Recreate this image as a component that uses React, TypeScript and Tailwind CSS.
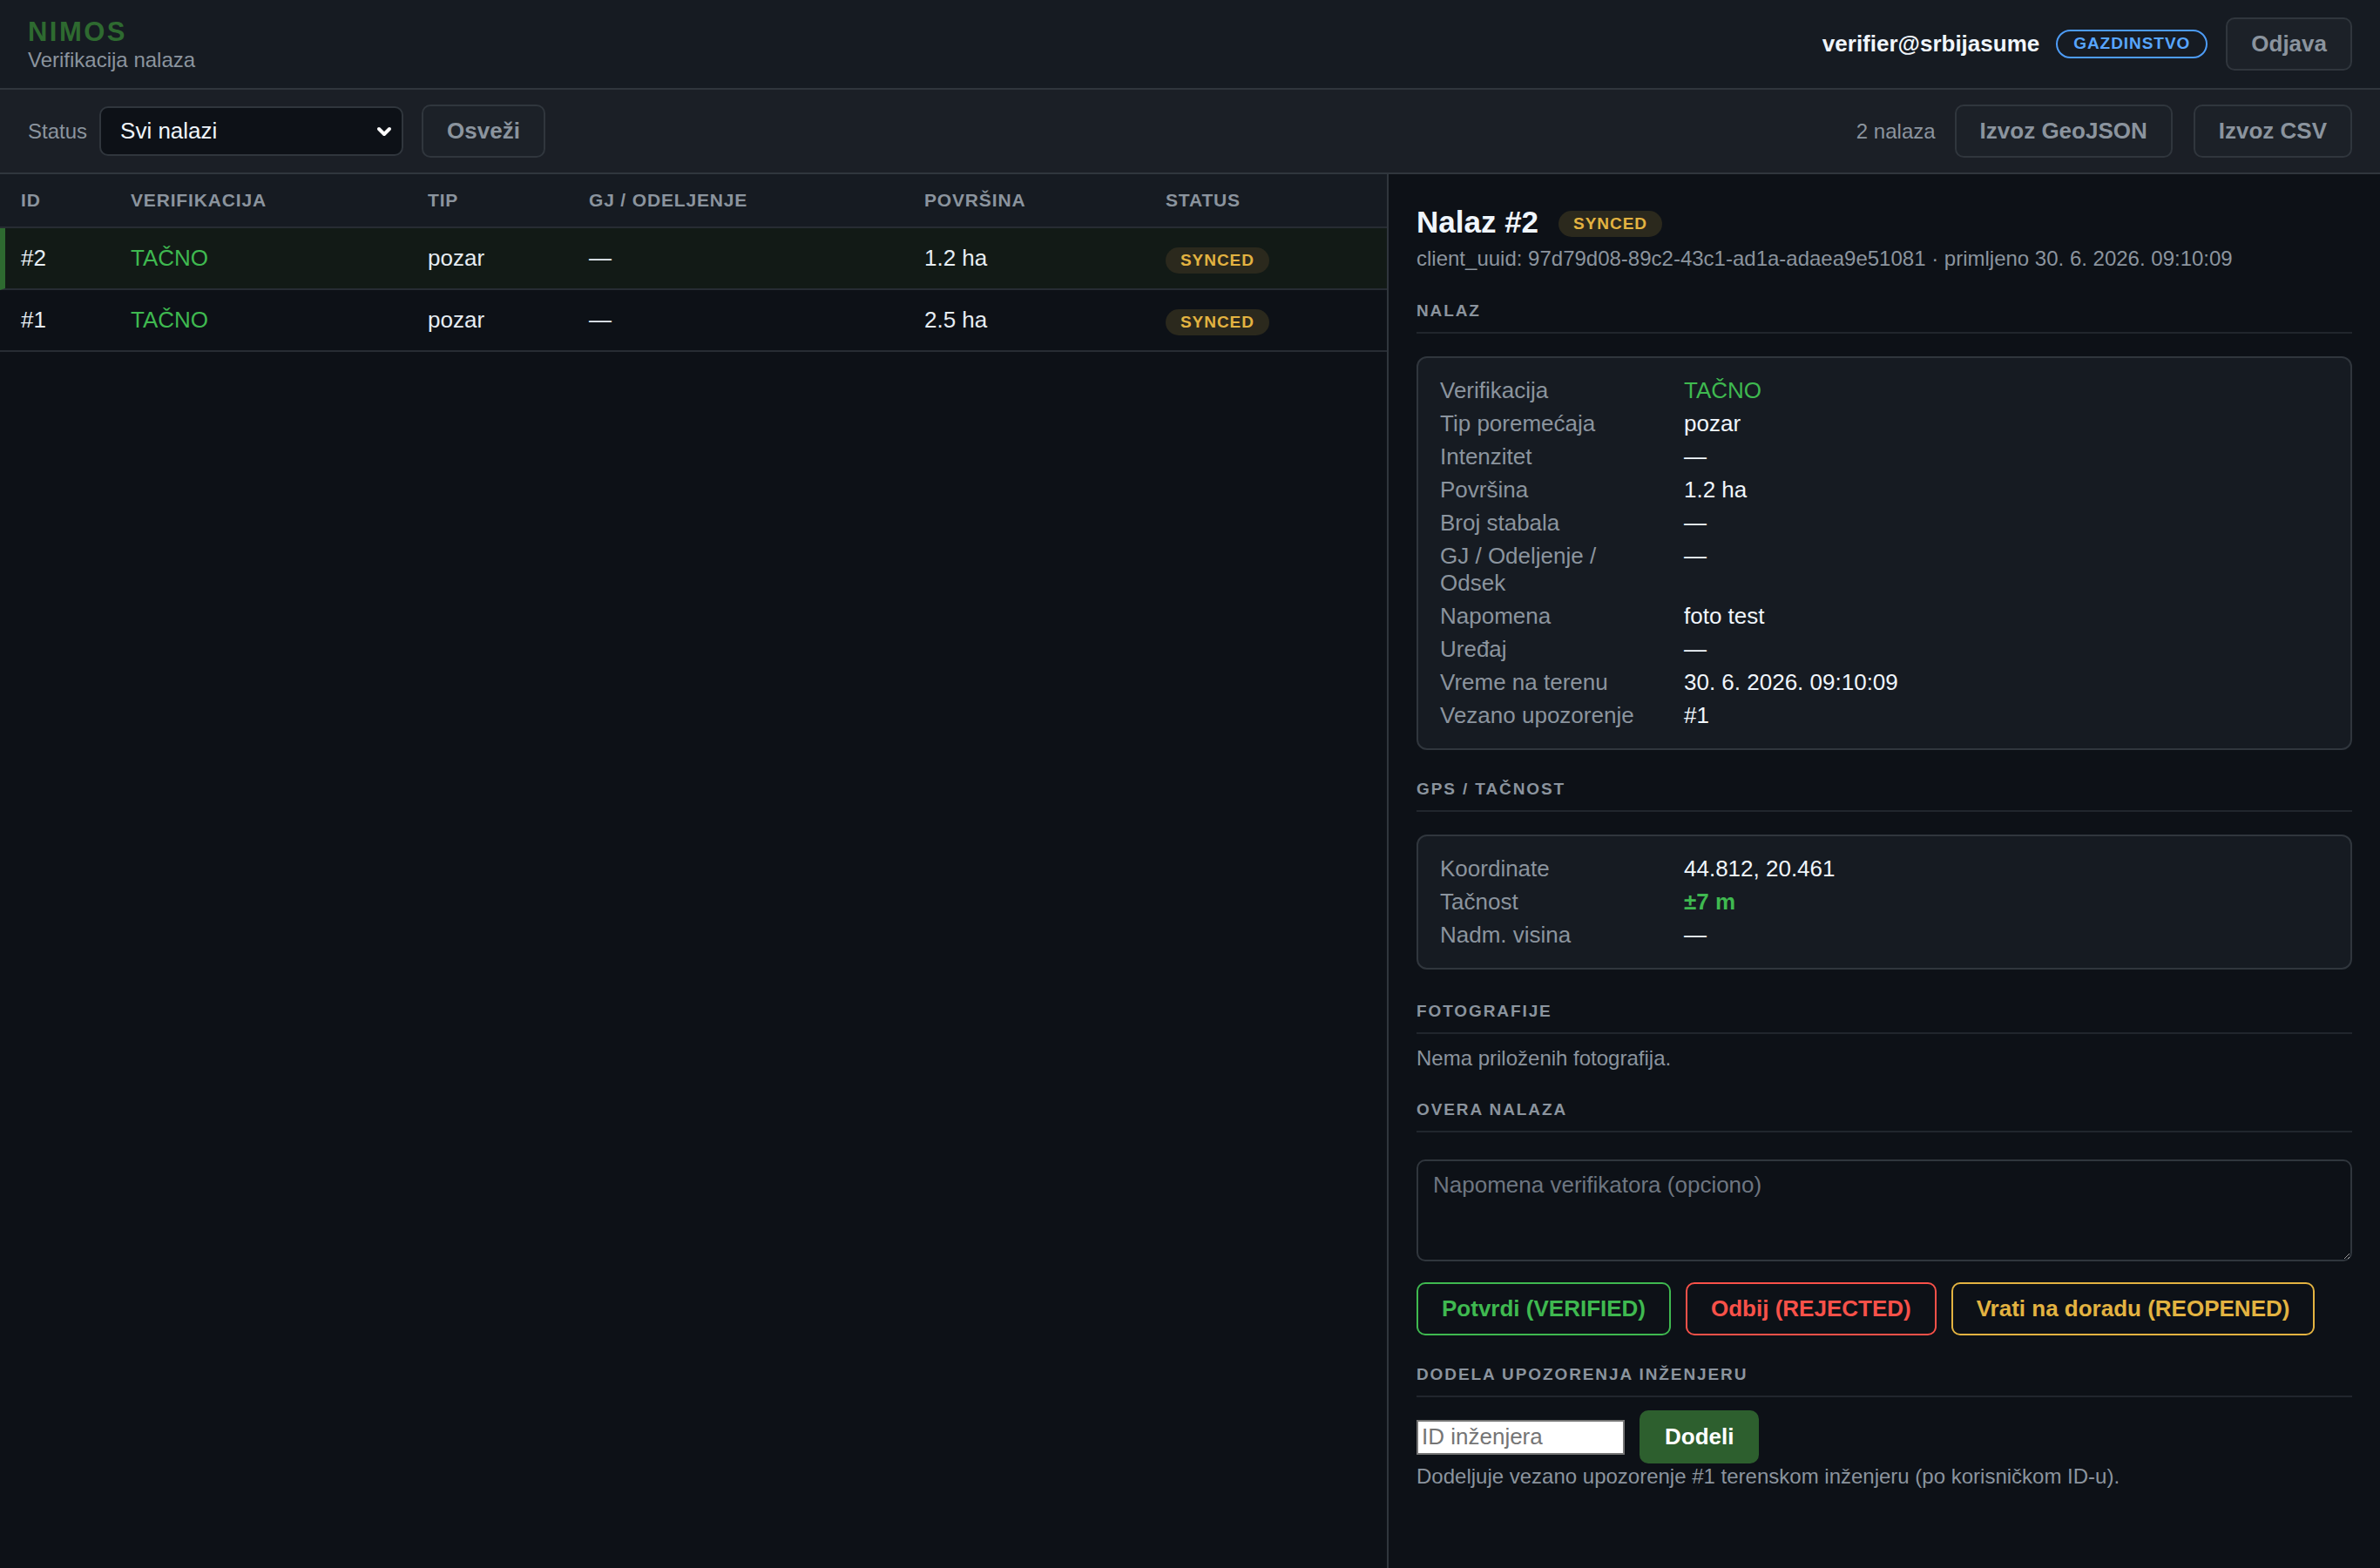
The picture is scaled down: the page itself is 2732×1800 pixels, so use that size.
import { ChevronDown } from "lucide-react"

const rows = [
	{ id: 2, ver: "TAČNO", tip: "pozar", gj: "—", pov: "1.2 ha", status: "SYNCED", selected: true },
	{ id: 1, ver: "TAČNO", tip: "pozar", gj: "—", pov: "2.5 ha", status: "SYNCED", selected: false },
]

const details: { label: string; value: string; green?: boolean }[] = [
	{ label: "Verifikacija", value: "TAČNO", green: true },
	{ label: "Tip poremećaja", value: "pozar" },
	{ label: "Intenzitet", value: "—" },
	{ label: "Površina", value: "1.2 ha" },
	{ label: "Broj stabala", value: "—" },
	{ label: "GJ / Odeljenje / Odsek", value: "—" },
	{ label: "Napomena", value: "foto test" },
	{ label: "Uređaj", value: "—" },
	{ label: "Vreme na terenu", value: "30. 6. 2026. 09:10:09" },
	{ label: "Vezano upozorenje", value: "#1" },
]

const Badge = ({ text }: { text: string }) => (
	<span className="inline-flex items-center h-[30px] px-[17px] rounded-full bg-[#2b291d] text-[#e3b341] text-[19px] font-bold tracking-[0.05em]">
		{text}
	</span>
)

const SectionTitle = ({ children }: { children: string }) => (
	<div className="text-[19px] leading-[22px] font-bold tracking-[0.1em] text-[#8b949e] pb-[13px] border-b-2 border-[#21262d]">
		{children}
	</div>
)

const GhostButton = ({ children }: { children: string }) => (
	<button className="h-[61px] px-[27px] rounded-[10px] border-2 border-[#30363d] bg-[#1c2128] text-[#8b949e] text-[26px] font-bold">
		{children}
	</button>
)

const App = () => {
	return (
		<div className="h-screen flex flex-col bg-[#0d1117] text-[#e6edf3] font-['Liberation_Sans',Arial,sans-serif]">
			{/* Header */}
			<header className="h-[103px] shrink-0 flex items-center justify-between px-[32px] bg-[#161b22] border-b-2 border-[#30363d]">
				<div className="pt-[2px]">
					<div className="text-[31px] leading-[34px] font-bold tracking-[0.08em] text-[#2e6a30]">NIMOS</div>
					<div className="text-[24px] leading-[30px] text-[#8b949e]">Verifikacija nalaza</div>
				</div>
				<div className="flex items-center">
					<span className="text-[26px] font-bold text-[#f0f6fc]">verifier@srbijasume</span>
					<span className="ml-[19px] h-[33px] px-[18px] rounded-full border-2 border-[#4d9cf6] text-[#58a6ff] text-[19px] font-bold tracking-[0.05em] flex items-center">
						GAZDINSTVO
					</span>
					<div className="ml-[21px]">
						<GhostButton>Odjava</GhostButton>
					</div>
				</div>
			</header>

			{/* Toolbar */}
			<div className="h-[97px] shrink-0 flex items-center justify-between px-[32px] bg-[#1b1f26] border-b-2 border-[#30363d]">
				<div className="flex items-center">
					<span className="text-[24px] text-[#8b949e]">Status</span>
					<div className="ml-[14px] w-[349px] h-[57px] flex items-center rounded-[10px] border-2 border-[#30363d] bg-[#0d1117] pl-[22px] pr-[8px]">
						<select className="flex-1 appearance-none bg-transparent text-[26px] text-[#f0f6fc] outline-none">
							<option>Svi nalazi</option>
						</select>
						<ChevronDown size={24} strokeWidth={4} className="text-white" />
					</div>
					<div className="ml-[21px]">
						<GhostButton>Osveži</GhostButton>
					</div>
				</div>
				<div className="flex items-center gap-[24px]">
					<span className="text-[24px] text-[#8b949e] mr-[-2px]">2 nalaza</span>
					<GhostButton>Izvoz GeoJSON</GhostButton>
					<GhostButton>Izvoz CSV</GhostButton>
				</div>
			</div>

			<div className="flex-1 flex min-h-0">
				{/* Table */}
				<div className="w-[1594px] shrink-0 border-r-2 border-[#30363d]">
					<div className="h-[62px] grid grid-cols-[126px_341px_185px_385px_277px_1fr] items-center pl-[24px] bg-[#161b22] border-b-2 border-[#272c33] text-[21px] font-bold tracking-[0.04em] text-[#8b949e]">
						<div>ID</div>
						<div>VERIFIKACIJA</div>
						<div>TIP</div>
						<div>GJ / ODELJENJE</div>
						<div>POVRŠINA</div>
						<div>STATUS</div>
					</div>
					{rows.map((r) => (
						<div
							key={r.id}
							className={`h-[71px] grid grid-cols-[126px_341px_185px_385px_277px_1fr] items-center border-b-2 border-[#272c33] text-[26px] ${
								r.selected ? "bg-[#121a16] border-l-[6px] border-l-[#2e6a30] pl-[18px]" : "pl-[24px]"
							}`}
						>
							<div>#{r.id}</div>
							<div className="text-[#3fb950]">{r.ver}</div>
							<div>{r.tip}</div>
							<div>{r.gj}</div>
							<div>{r.pov}</div>
							<div>
								<Badge text={r.status} />
							</div>
						</div>
					))}
				</div>

				{/* Detail */}
				<div className="flex-1 min-w-0 px-[32px] pt-[34px]">
					<div className="flex items-center">
						<span className="text-[35px] leading-[42px] font-bold text-[#f0f6fc]">Nalaz #2</span>
						<span className="ml-[23px] mt-[4px]">
							<Badge text="SYNCED" />
						</span>
					</div>
					<div className="mt-[4px] text-[24px] leading-[34px] text-[#8b949e]">
						client_uuid: 97d79d08-89c2-43c1-ad1a-adaea9e51081 · primljeno 30. 6. 2026. 09:10:09
					</div>

					<div className="mt-[32px]">
						<SectionTitle>NALAZ</SectionTitle>
					</div>
					<div className="mt-[26px] rounded-[12px] border-2 border-[#30363d] bg-[#161b22] px-[25px] py-[22px] grid grid-cols-[244px_1fr] gap-x-[36px] gap-y-[7px] text-[26px] leading-[31px]">
						{details.map((d) => (
							<div key={d.label} className="contents">
								<div className="text-[#8b949e]">{d.label}</div>
								<div className={d.green ? "text-[#3fb950]" : "text-[#f0f6fc]"}>{d.value}</div>
							</div>
						))}
					</div>

					<div className="mt-[34px]">
						<SectionTitle>GPS / TAČNOST</SectionTitle>
					</div>
					<div className="mt-[26px] rounded-[12px] border-2 border-[#30363d] bg-[#161b22] px-[25px] py-[22px] grid grid-cols-[244px_1fr] gap-x-[36px] gap-y-[7px] text-[26px] leading-[31px]">
						<div className="text-[#8b949e]">Koordinate</div>
						<div className="text-[#f0f6fc]">44.812, 20.461</div>
						<div className="text-[#8b949e]">Tačnost</div>
						<div className="text-[#3fb950] font-bold">±7 m</div>
						<div className="text-[#8b949e]">Nadm. visina</div>
						<div className="text-[#f0f6fc]">—</div>
					</div>

					<div className="mt-[37px]">
						<SectionTitle>FOTOGRAFIJE</SectionTitle>
					</div>
					<div className="mt-[11px] text-[24px] leading-[34px] text-[#8b949e]">Nema priloženih fotografija.</div>

					<div className="mt-[31px]">
						<SectionTitle>OVERA NALAZA</SectionTitle>
					</div>
					<textarea
						placeholder="Napomena verifikatora (opciono)"
						className="mt-[31px] block w-full h-[117px] rounded-[10px] border-2 border-[#30363d] bg-[#0d1117] px-[17px] py-[12px] text-[26px] leading-[31px] text-[#f0f6fc] placeholder:text-[#6e7681] outline-none"
					/>
					<div className="mt-[24px] flex gap-[17px]">
						<button className="h-[61px] px-[27px] rounded-[10px] border-2 border-[#3fb950] text-[#3fb950] text-[26px] font-bold">
							Potvrdi (VERIFIED)
						</button>
						<button className="h-[61px] px-[27px] rounded-[10px] border-2 border-[#f85149] text-[#f85149] text-[26px] font-bold">
							Odbij (REJECTED)
						</button>
						<button className="h-[61px] px-[27px] rounded-[10px] border-2 border-[#e3b341] text-[#e3b341] text-[26px] font-bold">
							Vrati na doradu (REOPENED)
						</button>
					</div>

					<div className="mt-[34px]">
						<SectionTitle>DODELA UPOZORENJA INŽENJERU</SectionTitle>
					</div>
					<div className="mt-[15px] flex items-center gap-[17px]">
						<input
							placeholder="ID inženjera"
							className="w-[239px] h-[40px] bg-white border-2 border-[#767676] px-[4px] text-[26px] text-black placeholder:text-[#757575] outline-none"
						/>
						<button className="h-[61px] px-[29px] rounded-[10px] bg-[#2d5f2e] text-white text-[26px] font-bold">Dodeli</button>
					</div>
					<div className="text-[24px] leading-[30px] text-[#8b949e]">
						Dodeljuje vezano upozorenje #1 terenskom inženjeru (po korisničkom ID-u).
					</div>
				</div>
			</div>
		</div>
	)
}

export default App
